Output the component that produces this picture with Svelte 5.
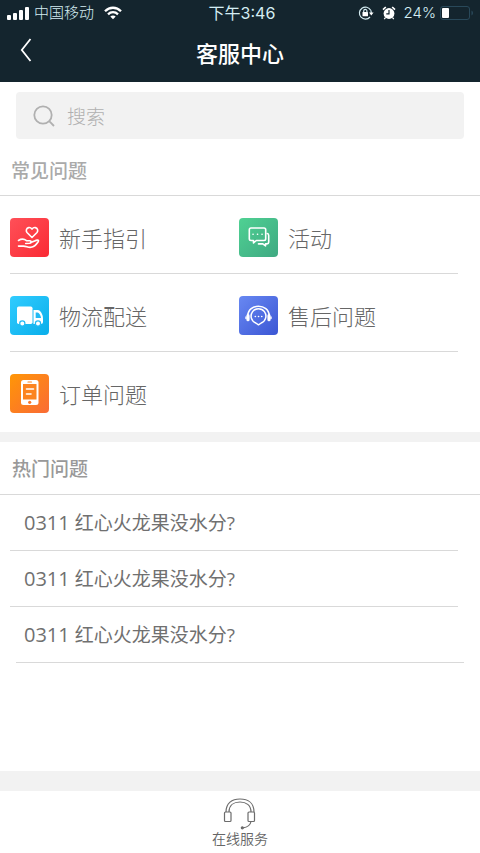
<script lang="ts">
  type Topic = { icon: string; label: string };

  const topicRows: Topic[][] = [
    [
      { icon: "guide", label: "新手指引" },
      { icon: "activity", label: "活动" },
    ],
    [
      { icon: "delivery", label: "物流配送" },
      { icon: "support", label: "售后问题" },
    ],
    [{ icon: "order", label: "订单问题" }],
  ];

  const questions = [
    { code: "0311", text: "红心火龙果没水分?" },
    { code: "0311", text: "红心火龙果没水分?" },
    { code: "0311", text: "红心火龙果没水分?" },
  ];

  let keyword = $state("");
</script>

<div class="page">
  <header>
    <div class="status">
      <div class="carrier">
        <svg width="22" height="14" viewBox="0 0 22 14" fill="#fff">
          <rect x="0" y="9" width="4" height="5" rx="1" />
          <rect x="6" y="7" width="4" height="7" rx="1" />
          <rect x="12" y="4" width="4" height="10" rx="1" />
          <rect x="18" y="1" width="4" height="13" rx="1" />
        </svg>
        <span>中国移动</span>
        <svg class="wifi" width="18" height="14" viewBox="0 0 18 14" fill="none" stroke="#fff" stroke-width="2.3">
          <path d="M1 5.2C5.6.6 12.4.6 17 5.2" />
          <path d="M4 8.3c2.9-2.8 7.1-2.8 10 0" />
          <path d="M6.3 10.5c1.5-1.5 3.9-1.5 5.4 0L9 13.2z" fill="#fff" stroke="none" />
        </svg>
      </div>
      <span class="time">下午3:46</span>
      <div class="power">
        <svg width="16" height="14" viewBox="0 0 16 14" fill="none" stroke="#d5edf3" stroke-width="1.2">
          <path d="M12.7 4.2A6 6 0 1 0 12 11" />
          <path d="M12.7 4.2c.5 1 .6 1.9.6 3" />
          <path d="M11 6.5h4.6l-2.3 2.9z" fill="#fff" stroke="none" />
          <rect x="4.5" y="6" width="5.5" height="4.2" rx=".5" fill="#fff" stroke="none" />
          <path d="M5.7 6.2V5a1.6 1.6 0 0 1 3.2 0v1.2" />
        </svg>
        <svg width="14" height="14" viewBox="0 0 14 14" fill="#fff">
          <circle cx="7" cy="7.5" r="5.4" />
          <path d="M1 3.6 3.8 1M13 3.6 10.2 1" stroke="#fff" stroke-width="1.7" />
          <path d="m3.5 11.5-1.2 1.7M10.5 11.5l1.2 1.7" stroke="#fff" stroke-width="1.3" />
          <path d="M7 4v3.8H4.3" fill="none" stroke="#14252e" stroke-width="1.2" />
        </svg>
        <span>24%</span>
        <svg class="battery" width="34" height="15" viewBox="0 0 34 15">
          <rect x=".5" y=".5" width="29" height="13" rx="2.5" fill="none" stroke="#29495a" />
          <rect x="2" y="2" width="7" height="10" rx="1" fill="#fff" />
          <path d="M31.5 4.5c2 1 2 4 0 5z" fill="#29495a" />
        </svg>
      </div>
    </div>
    <div class="nav">
      <button class="back" aria-label="返回">
        <svg width="12" height="24" viewBox="0 0 12 24" fill="none" stroke="#fff" stroke-width="1.8">
          <path d="M10.5 1 1.8 12l8.7 11" />
        </svg>
      </button>
      <h1>客服中心</h1>
    </div>
  </header>

  <label class="search">
    <svg width="22" height="22" viewBox="0 0 22 22" fill="none" stroke="#b0b0b0" stroke-width="1.8">
      <circle cx="10" cy="10" r="8.7" />
      <path d="m16.2 16.2 4.8 4.8" />
    </svg>
    <input type="text" placeholder="搜索" aria-label="搜索" bind:value={keyword} />
  </label>

  <section>
    <h2 class="common">常见问题</h2>
    <div class="topics">
      {#each topicRows as row}
        <div class="row">
          {#each row as topic}
            <button class="topic">
              <span class="icon {topic.icon}">
                <svg width="39" height="39" viewBox="0 0 39 39" fill="none" stroke="#fff" stroke-width="1.6" stroke-linecap="round" stroke-linejoin="round">
                  {#if topic.icon === "guide"}
                    <path d="m22 19.5-5-5c-1.5-2-.5-4.5 1.700-4.900 1.400-.2 2.500.4 3.300 1.500.8-1.100 1.900-1.700 3.300-1.500 2.200.4 3.200 2.900 1.700 4.900z" />
                    <path d="M8.500 22.500c3-1.900 5.500-1.800 8 .2h3.400c1.700 0 1.700 2.300 0 2.500l-4.200.3" />
                    <path d="M20.500 24.300c2.500-.1 4.700-1.800 6.700-2.200 1.200-.2 1.700.7 1 1.600-2 3-4.500 5.200-7.200 5.600-2.700.5-4.800-1.200-7.500-1.200h-5" />
                  {:else if topic.icon === "activity"}
                    <path d="M12 10h13q1.700 0 1.700 1.700v9.100q0 1.700-1.700 1.700h-7.700L14.500 25v-2.500H12q-1.700 0-1.700-1.700v-9.100Q10.300 10 12 10z" />
                    <path d="M28.200 15.500q1.500.2 1.500 1.900v6.900q0 1.600-1.700 1.600h-1.500v2l-2.700-2h-4.300" />
                    <path d="M14 16.300h.1M18.500 16.300h.1M23 16.300h.1" />
                  {:else if topic.icon === "delivery"}
                    <g fill="#fff" stroke="none">
                      <rect x="7" y="10.5" width="15.5" height="17.5" rx="1.7" />
                      <path d="M23.500 14h4.300c2.700 0 5.200 4.700 5.200 8.500V26q0 2-2 2h-7.500z" />
                    </g>
                    <path d="M25.700 16.500h1.800c1.500 0 3.100 2.500 3.600 5.500h-5.400z" fill="#22baf3" stroke="none" />
                    <g fill="#fff" stroke="#22baf3" stroke-width="1.2">
                      <circle cx="12.3" cy="27.5" r="2.6" />
                      <circle cx="28" cy="27.5" r="2.6" />
                    </g>
                  {:else if topic.icon === "support"}
                    <path d="M8.700 20C9.200 7 29.800 7 30.300 20" />
                    <path d="M19.500 28.800 16.800 27A7.400 7.400 0 1 1 22.200 27z" stroke-width="1.5" />
                    <path d="M9 19.700v4M30 19.700v4" stroke-width="3.2" />
                    <path d="M7 21v1.500M32 21v1.500" stroke-width="1.4" />
                    <path d="M16.300 20.500h.1M19.500 20.500h.1M22.700 20.500h.1" />
                  {:else}
                    <rect x="11" y="6" width="17.5" height="25" rx="2.5" fill="#fff" stroke="none" />
                    <rect x="13" y="10" width="13.5" height="15.5" fill="#fc8420" stroke="none" />
                    <path d="M18 8h3.500" stroke="#fc8420" stroke-width="1.2" />
                    <circle cx="19.7" cy="28.3" r="1.6" fill="#fc7628" stroke="none" />
                    <path d="M16.500 15h7M16.500 20h4.500" />
                  {/if}
                </svg>
              </span>
              <span class="label">{topic.label}</span>
            </button>
          {/each}
        </div>
      {/each}
    </div>
  </section>

  <section class="hot">
    <h2>热门问题</h2>
    <ul>
      {#each questions as question}
        <li>
          <a href="#question"><span class="code">{question.code}</span> {question.text}</a>
        </li>
      {/each}
    </ul>
  </section>

  <footer>
    <button class="service">
      <svg width="34" height="32" viewBox="0 0 34 32" fill="none" stroke="#6c6c6c" stroke-width="1.2">
        <path d="M3 14C3 5 9 1 17 1s14 4 14 13" />
        <path d="M6 14c0-7 5-10 11-10s11 3 11 10" />
        <rect x="1.5" y="14" width="6.5" height="9.5" rx="1" />
        <rect x="25" y="14" width="6.5" height="9.5" rx="1" />
        <path d="M28 23.500c-.7 3.500-3.500 5.800-8 6.300" />
        <circle cx="19.3" cy="29.8" r="1" fill="#6c6c6c" />
      </svg>
      在线服务
    </button>
  </footer>
</div>

<style>
  :global(body) {
    margin: 0;
  }

  .page {
    display: flex;
    flex-direction: column;
    min-height: 100vh;
    background: #fff;
    color: #666;
    font-family: Inter, "Noto Sans CJK SC", sans-serif;
    font-weight: 300;
  }

  svg {
    display: block;
    flex: none;
  }

  h1,
  h2,
  ul {
    margin: 0;
    padding: 0;
  }

  button {
    padding: 0;
    border: none;
    background: none;
    color: inherit;
    font: inherit;
    cursor: pointer;
  }

  header {
    background: #14252e;
    color: #fff;
  }

  .status {
    display: grid;
    grid-template-columns: 1fr auto 1fr;
    align-items: center;
    height: 26px;
    padding: 0 7px;
    color: #d5edf3;
    font-size: 15px;
    line-height: 26px;
  }

  .carrier,
  .power {
    display: flex;
    align-items: center;
    gap: 5px;
  }

  .wifi {
    margin-left: 5px;
  }

  .time {
    padding-left: 4px;
    font-size: 16px;
    font-weight: 400;
  }

  .power {
    justify-content: flex-end;
    gap: 8px;
  }

  .battery {
    margin: 0 -1px 0 -4px;
  }

  .nav {
    display: grid;
    grid-template-columns: 60px 1fr 60px;
    align-items: center;
    height: 56px;
  }

  .back {
    padding: 0 20px 8px;
  }

  h1 {
    font-size: 22px;
    font-weight: 500;
    line-height: 32px;
    text-align: center;
  }

  .search {
    display: flex;
    align-items: center;
    gap: 12px;
    height: 47px;
    margin: 10px 16px 0;
    padding: 0 17px;
    border-radius: 4px;
    background: #f2f2f2;
  }

  input {
    flex: 1;
    min-width: 0;
    padding: 3px 0 0;
    border: none;
    outline: none;
    background: none;
    color: #666;
    font: inherit;
    font-size: 19px;
  }

  input::placeholder {
    color: #b0b0b0;
  }

  h2 {
    padding: 14px 12px 10px;
    border-bottom: 1px solid #d9d9d9;
    color: #999;
    font-size: 19px;
    font-weight: 500;
    line-height: 28px;
  }

  .common {
    padding: 19px 11px 9px;
    color: #aaa;
  }

  .topics {
    padding: 0 22px 3px 10px;
  }

  .row {
    display: grid;
    grid-template-columns: 1fr 1fr;
    gap: 10px;
    padding: 22px 0 16px;
    border-bottom: 1px solid #d9d9d9;
  }

  .row:last-child {
    border-bottom: none;
  }

  .topic {
    display: flex;
    align-items: center;
    gap: 10px;
    font-size: 22px;
    line-height: 32px;
  }

  .label {
    padding-top: 2px;
  }

  .icon {
    border-radius: 4px;
  }

  .guide {
    background: linear-gradient(135deg, #ff5058, #fa2a34);
  }

  .activity {
    background: linear-gradient(135deg, #4fd193, #3fa982);
  }

  .delivery {
    background: linear-gradient(135deg, #31ccff, #09aeea);
  }

  .support {
    background: linear-gradient(135deg, #6888f2, #3b56d4);
  }

  .order {
    background: linear-gradient(135deg, #ff9606, #fa6b36);
  }

  .hot {
    flex: 1;
    border-top: 10px solid #f2f2f2;
  }

  ul {
    list-style: none;
  }

  li {
    margin: 0 22px 0 10px;
    border-bottom: 1px solid #d9d9d9;
  }

  li:last-child {
    margin: 0 16px;
  }

  li:last-child a {
    padding-left: 8px;
  }

  a {
    display: block;
    padding: 14px 14px 13px;
    color: #707070;
    font-family: "Open Sans", "Noto Sans CJK SC", sans-serif;
    font-size: 19px;
    font-weight: 400;
    line-height: 28px;
    text-decoration: none;
  }

  .code {
    font-size: 20px;
  }

  footer {
    border-top: 20px solid #f2f2f2;
  }

  .service {
    display: flex;
    flex-direction: column;
    align-items: center;
    width: 100%;
    padding: 7px 0 5px;
    font-size: 14px;
    font-weight: 350;
    line-height: 18px;
  }
</style>
